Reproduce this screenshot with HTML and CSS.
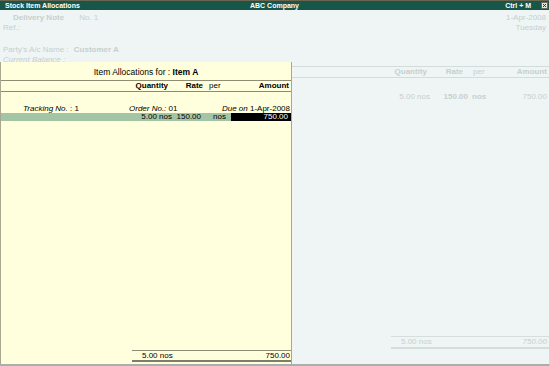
FILE: index.html
```html
<!DOCTYPE html>
<html>
<head>
<meta charset="utf-8">
<title>Stock Item Allocations</title>
<link rel="stylesheet" href="styles.css">
</head>
<body>
<div class="screen">
  <div class="titlebar">
    <span class="tb-left">Stock Item Allocations</span>
    <span class="tb-center">ABC Company</span>
    <span class="tb-right">Ctrl + M
      <svg class="close" width="7" height="7" viewBox="0 0 7 7"><rect x="0.5" y="0.5" width="6" height="6" fill="#e6e6de" stroke="#6a6a60" stroke-width="1"/><path d="M2 2 L5 5 M5 2 L2 5" stroke="#333" stroke-width="1"/></svg>
    </span>
  </div>

  <div class="vrow first">
    <span class="vleft"><span class="vtype">Delivery Note</span><span class="vno">No. 1</span></span>
    <span>1-Apr-2008</span>
  </div>
  <div class="vrow">
    <span>Ref.:</span>
    <span>Tuesday</span>
  </div>
  <div class="vrow party">
    <span>Party's A/c Name : <b class="pname">Customer A</b></span>
  </div>
  <div class="vrow italic">
    <span>Current Balance :</span>
  </div>

  <div class="items items-head">
    <span></span>
    <span class="c-qty">Quantity</span>
    <span class="c-rate">Rate</span>
    <span class="c-per">per</span>
    <span class="c-amt">Amount</span>
  </div>
  <div class="items items-row">
    <span></span>
    <span class="c-qty">5.00 nos</span>
    <span class="c-rate bold">150.00</span>
    <span class="c-per bold">nos</span>
    <span class="c-amt">750.00</span>
  </div>
  <div class="grow"></div>
  <div class="items-total">
    <span class="t-qty">5.00 nos</span>
    <span class="t-amt">750.00</span>
  </div>

  <div class="alloc">
    <div class="alloc-title">Item Allocations for : <b>Item A</b></div>
    <div class="agrid alloc-head">
      <span></span>
      <span class="a-qty">Quantity</span>
      <span class="a-rate">Rate</span>
      <span class="a-per">per</span>
      <span class="a-amt">Amount</span>
    </div>
    <div class="track">
      <span class="track-no"><i>Tracking No.</i> : 1</span>
      <span><i>Order No.:</i> 01</span>
      <span class="track-due"><i>Due on</i> 1-Apr-2008</span>
    </div>
    <div class="agrid alloc-row">
      <span></span>
      <span class="a-qty">5.00 nos</span>
      <span class="a-rate">150.00</span>
      <span class="a-per">nos</span>
      <span class="a-amt sel">750.00</span>
    </div>
    <div class="grow"></div>
    <div class="alloc-total">
      <span>5.00 nos</span>
      <span>750.00</span>
    </div>
  </div>
</div>
</body>
</html>
```
FILE: styles.css
```css
html, body {
  margin: 0;
  padding: 0;
  background: #eef5f4;
}
body {
  font-family: "Liberation Sans", Arial, sans-serif;
  font-size: 8px;
  line-height: 10px;
}
.screen {
  position: relative;
  width: 550px;
  height: 366px;
  box-sizing: border-box;
  background: #eef5f4;
  border-bottom: 2px solid #a7b0ad;
  border-right: 1px solid #d2dad8;
  display: flex;
  flex-direction: column;
  overflow: hidden;
  color: #c6d0ce;
}
.titlebar {
  height: 9px;
  border-top: 1px solid #6c6650;
  background: #17574a;
  color: #ffffff;
  font-weight: bold;
  font-size: 7px;
  line-height: 9px;
  display: grid;
  grid-template-columns: 1fr auto 1fr;
  align-items: center;
}
.tb-left { padding-left: 5px; }
.tb-right {
  justify-self: end;
  display: flex;
  align-items: center;
  padding-right: 1px;
}
.close { margin-left: 10px; display: block; }

.vrow {
  display: flex;
  justify-content: space-between;
  height: 10px;
  padding: 0 3px 0 3px;
}
.vrow.first { margin-top: 3px; }
.vleft { padding-left: 10px; }
.vtype { font-weight: bold; }
.vno { margin-left: 15px; }
.vrow.party { margin-top: 12px; }
.pname { margin-left: 3px; }
.italic { font-style: italic; }
.bold { font-weight: bold; }

.items {
  display: grid;
  grid-template-columns: 1fr 44px 38px 22px 57px;
  padding-right: 2px;
  height: 10px;
}
.items-head {
  margin-top: 1px;
  border-top: 1px solid #d3dcda;
  border-bottom: 1px solid #d3dcda;
  font-weight: bold;
}
.items-head .c-qty { text-align: right; padding-right: 3px; }
.items-head .c-rate { text-align: right; padding-right: 5px; }
.items-head .c-per { padding-left: 5px; font-weight: normal; }
.items-head .c-amt { text-align: right; }
.items-row { margin-top: 14px; }
.items-row .c-qty { text-align: right; }
.items-row .c-rate { text-align: right; }
.items-row .c-per { padding-left: 4px; }
.items-row .c-amt { text-align: right; }
.grow { flex: 1; }
.items-total {
  margin-left: 391px;
  margin-bottom: 15px;
  border-top: 1px solid #d6dedc;
  border-bottom: 2px solid #d6dedc;
  height: 10px;
  display: flex;
  justify-content: space-between;
  padding: 0 2px 0 10px;
}
.t-amt { font-style: italic; }

/* allocation panel overlay */
.alloc {
  position: absolute;
  left: 0;
  top: 62px;
  width: 292px;
  height: 302px;
  box-sizing: border-box;
  background: #ffffdd;
  border-left: 1px solid #a7a792;
  border-right: 1px solid #a7a792;
  display: flex;
  flex-direction: column;
  color: #000;
}
.alloc-title {
  padding: 5px 0 3px;
  text-align: center;
  font-size: 8.5px;
  border-bottom: 1px solid #8e8d74;
}
.agrid {
  display: grid;
  grid-template-columns: 129px 42px 31px 28px 60px;
}
.alloc-head {
  font-weight: bold;
  border-bottom: 1px solid #8e8d74;
}
.alloc-head .a-qty { text-align: right; padding-right: 4px; }
.alloc-head .a-rate { text-align: right; }
.alloc-head .a-per { padding-left: 6px; font-weight: normal; }
.alloc-head .a-amt { text-align: right; padding-right: 2px; }
.track {
  margin-top: 12px;
  line-height: 9px;
  height: 9px;
  display: grid;
  grid-template-columns: 128px 1fr auto;
}
.track-no { padding-left: 22px; }
.track-due { padding-right: 1px; }
.alloc-row {
  height: 8px;
  line-height: 8px;
  background: #a4c5a5;
}
.alloc-row .a-qty { text-align: right; }
.alloc-row .a-rate { text-align: right; padding-right: 2px; }
.alloc-row .a-per { padding-left: 10px; }
.alloc-row .a-amt { text-align: right; padding-right: 3px; }
.sel { background: #000; color: #fff; }
.alloc-total {
  margin-left: 131px;
  margin-bottom: 2px;
  border-top: 1px solid #8e8d74;
  border-bottom: 2px solid #7f7e68;
  line-height: 9px;
  height: 9px;
  display: flex;
  justify-content: space-between;
  padding: 0 1px 0 10px;
}
```
